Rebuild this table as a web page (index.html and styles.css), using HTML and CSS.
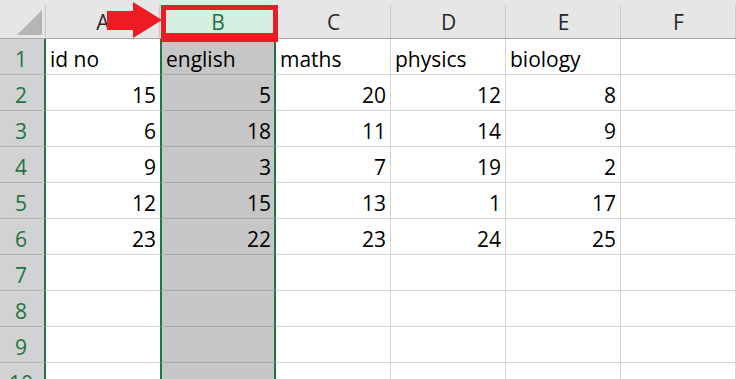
FILE: index.html
```html
<!DOCTYPE html>
<html lang="en">
<head>
<meta charset="UTF-8" />
<title>Scores</title>
<link rel="stylesheet" href="styles.css">
</head>
<body>
<div class="sheet">
  <!-- column headers -->
  <div class="cell corner">
    <svg class="corner-mark" width="44" height="38" viewBox="0 0 44 38"><polygon points="42,10 42,35 17,35" fill="#b5b5b5"/></svg>
  </div>
  <div class="cell col-head">A</div>
  <div class="cell col-head active">B</div>
  <div class="cell col-head">C</div>
  <div class="cell col-head">D</div>
  <div class="cell col-head">E</div>
  <div class="cell col-head">F</div>

  <div class="cell row-head">1</div>
  <div class="cell a">id no</div>
  <div class="cell sel">english</div>
  <div class="cell">maths</div>
  <div class="cell">physics</div>
  <div class="cell">biology</div>
  <div class="cell"></div>

  <div class="cell row-head">2</div>
  <div class="cell a num">15</div>
  <div class="cell sel num">5</div>
  <div class="cell num">20</div>
  <div class="cell num">12</div>
  <div class="cell num">8</div>
  <div class="cell"></div>

  <div class="cell row-head">3</div>
  <div class="cell a num">6</div>
  <div class="cell sel num">18</div>
  <div class="cell num">11</div>
  <div class="cell num">14</div>
  <div class="cell num">9</div>
  <div class="cell"></div>

  <div class="cell row-head">4</div>
  <div class="cell a num">9</div>
  <div class="cell sel num">3</div>
  <div class="cell num">7</div>
  <div class="cell num">19</div>
  <div class="cell num">2</div>
  <div class="cell"></div>

  <div class="cell row-head">5</div>
  <div class="cell a num">12</div>
  <div class="cell sel num">15</div>
  <div class="cell num">13</div>
  <div class="cell num">1</div>
  <div class="cell num">17</div>
  <div class="cell"></div>

  <div class="cell row-head">6</div>
  <div class="cell a num">23</div>
  <div class="cell sel num">22</div>
  <div class="cell num">23</div>
  <div class="cell num">24</div>
  <div class="cell num">25</div>
  <div class="cell"></div>

  <div class="cell row-head">7</div>
  <div class="cell a"></div>
  <div class="cell sel"></div>
  <div class="cell"></div>
  <div class="cell"></div>
  <div class="cell"></div>
  <div class="cell"></div>

  <div class="cell row-head">8</div>
  <div class="cell a"></div>
  <div class="cell sel"></div>
  <div class="cell"></div>
  <div class="cell"></div>
  <div class="cell"></div>
  <div class="cell"></div>

  <div class="cell row-head">9</div>
  <div class="cell a"></div>
  <div class="cell sel"></div>
  <div class="cell"></div>
  <div class="cell"></div>
  <div class="cell"></div>
  <div class="cell"></div>

  <div class="cell row-head">10</div>
  <div class="cell a"></div>
  <div class="cell sel"></div>
  <div class="cell"></div>
  <div class="cell"></div>
  <div class="cell"></div>
  <div class="cell"></div>

  <!-- callout: arrow pointing at the selected column -->
  <svg class="arrow" width="64" height="40" viewBox="0 0 64 40">
    <polygon points="7,11 33,11 33,2 62,20 33,38 33,30 7,30" fill="#ed1c24"/>
  </svg>
  <div class="mark-box"></div>
</div>
</body>
</html>
```

FILE: styles.css
```css
*, *::before, *::after {
  box-sizing: border-box;
}
body {
  margin: 0;
  background: #fff;
  overflow: hidden;
  font-family: 'Open Sans', 'Lato', sans-serif;
}

/* grid */
.sheet {
  position: relative;
  display: grid;
  grid-template-columns: 46px 114px 116px 115px 115px 115px 115px;
  grid-template-rows: 39px repeat(10, 36px);
}
.cell {
  display: flex;
  align-items: flex-end;
  padding: 0 4px 2px 4px;
  border-right: 1px solid #d4d4d4;
  border-bottom: 1px solid #d4d4d4;
  font-size: 21px;
  line-height: 1.2;
  color: #000;
  white-space: nowrap;
  overflow: hidden;
}
.cell.num {
  justify-content: flex-end;
}
.cell.a {
  border-right: none;
}
.cell.sel {
  background: #c6c6c6;
  border-bottom-color: #a8a8a8;
  border-left: 2px solid #217346;
  border-right: 2px solid #217346;
  padding-left: 4px;
  padding-right: 3px;
}

/* headers */
.corner,
.col-head {
  position: relative;
  background: #e6e6e6;
  border-right: none;
  border-bottom: 1px solid #a9a9a9;
}
.corner::after,
.col-head::after {
  content: '';
  position: absolute;
  right: 0;
  top: 5px;
  bottom: 0;
  width: 1px;
  background: #c9c9c9;
}
.corner {
  padding: 0;
}
.corner-mark {
  display: block;
}
.col-head {
  justify-content: center;
  padding: 0 0 3px;
  color: #262626;
}
.col-head.active {
  background: #d3f0e0;
  color: #217346;
}
.row-head {
  justify-content: center;
  padding: 0 2px 2px 0;
  background: #d2d2d2;
  color: #217346;
  border-right: 2px solid #217346;
  border-bottom-color: #b3b3b3;
}

/* callout */
.arrow {
  position: absolute;
  left: 100px;
  top: 0;
}
.mark-box {
  position: absolute;
  left: 161px;
  top: 5px;
  width: 117px;
  height: 37px;
  border: 5px solid #ed1c24;
  border-bottom-width: 9px;
}
```
